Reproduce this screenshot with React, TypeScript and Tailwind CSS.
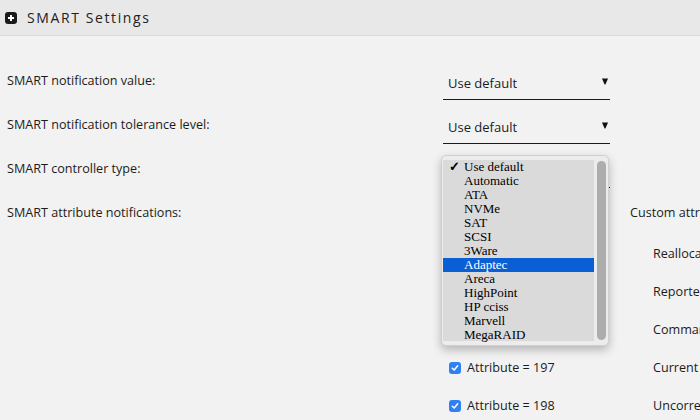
import React from 'react';

const controllerTypes = [
    'Use default', 'Automatic', 'ATA', 'NVMe', 'SAT', 'SCSI', '3Ware',
    'Adaptec', 'Areca', 'HighPoint', 'HP cciss', 'Marvell', 'MegaRAID',
];

const attributes = [
    { id: 5, name: 'Reallocated sectors count' },
    { id: 187, name: 'Reported uncorrect' },
    { id: 188, name: 'Command timeout' },
    { id: 197, name: 'Current pending sector count' },
    { id: 198, name: 'Uncorrectable sector count' },
];

const SelectBox: React.FC<{ value: string }> = ({ value }) => (
    <div className="w-[167px] h-[37px] border-b border-[#1c1c1c] flex items-end justify-between pl-[5px] pr-[2px] pb-[7px] text-[13px] text-[#1c1c1c]">
        <span className="leading-[18px]">{value}</span>
        <span className="h-[18px] flex items-center pb-[2px]">
            <svg width="6" height="7" viewBox="0 0 6 7">
                <path d="M0 0.5 H6 L3.4 6.5 H2.6 Z" fill="#111" />
            </svg>
        </span>
    </div>
);

const CheckBox: React.FC = () => (
    <span className="w-[12px] h-[12px] rounded-[3px] bg-[#2f80f5] flex items-center justify-center">
        <svg width="8" height="8" viewBox="0 0 8 8">
            <path d="M1.3 4.2 L3.2 6 L6.7 1.8" stroke="white" strokeWidth="1.5" fill="none" strokeLinecap="round" strokeLinejoin="round" />
        </svg>
    </span>
);

export default function App() {
    return (
        <div className="relative w-[700px] h-[420px] overflow-hidden bg-[#f2f2f2] font-['Open_Sans',sans-serif] text-[#1c1c1c]">
            {/* section header */}
            <div className="h-[36px] bg-[#e8e8e8] border-b border-[#dadada] flex items-center pl-[5px] gap-[10px]">
                <span className="w-[12px] h-[12px] rounded-[3px] bg-[#1a1a1a] flex items-center justify-center">
                    <svg width="8" height="8" viewBox="0 0 8 8">
                        <path d="M4 1 V7 M1 4 H7" stroke="white" strokeWidth="2" />
                    </svg>
                </span>
                <span className="text-[14px] tracking-[1.6px] text-[#222]">SMART Settings</span>
            </div>

            <div className="pt-[23px] pl-[7px] grid grid-cols-[436px_187px_1fr] text-[12.6px] whitespace-nowrap">
                <div className="h-[44px] flex items-center">SMART notification value:</div>
                <div className="h-[44px] flex items-center"><SelectBox value="Use default" /></div>
                <div />

                <div className="h-[44px] flex items-center">SMART notification tolerance level:</div>
                <div className="h-[44px] flex items-center"><SelectBox value="Use default" /></div>
                <div />

                <div className="h-[44px] flex items-center">SMART controller type:</div>
                <div className="h-[44px] flex items-center"><SelectBox value="Use default" /></div>
                <div />

                <div className="h-[44px] flex items-center">SMART attribute notifications:</div>
                <div />
                <div className="h-[44px] flex items-center">Custom attributes:</div>

                {attributes.map((a) => (
                    <React.Fragment key={a.id}>
                        <div className="h-[38px]" />
                        <div className="h-[38px] flex items-center gap-[6px] pl-[6px]">
                            <CheckBox />
                            <span>Attribute = {a.id}</span>
                        </div>
                        <div className="h-[38px] flex items-center pl-[23px]">{a.name}</div>
                    </React.Fragment>
                ))}
            </div>

            {/* open dropdown list */}
            <div className="absolute left-[441px] top-[155px] w-[168px] h-[191px] bg-[#ececec] border border-[#cfcfcf] rounded-[5px] shadow-[0_4px_10px_rgba(0,0,0,0.25)] flex pl-[1px] pt-[4px] pb-[4px]">
                <div className="w-[151px] bg-[#dadada] font-['Liberation_Serif',serif] text-[13px] leading-[14px] text-black">
                    {controllerTypes.map((t) => (
                        <div
                            key={t}
                            className={t === 'Adaptec' ? 'h-[14px] flex bg-[#0b5fd4] text-white' : 'h-[14px] flex'}
                        >
                            <span className="w-[21px] pl-[6px] font-bold">{t === 'Use default' ? '✓' : ''}</span>
                            <span>{t}</span>
                        </div>
                    ))}
                </div>
                <div className="w-[14px] flex justify-center pt-[1px] pb-[1px]">
                    <div className="w-[9px] h-full rounded-full bg-[#adadad]" />
                </div>
            </div>
        </div>
    );
}
